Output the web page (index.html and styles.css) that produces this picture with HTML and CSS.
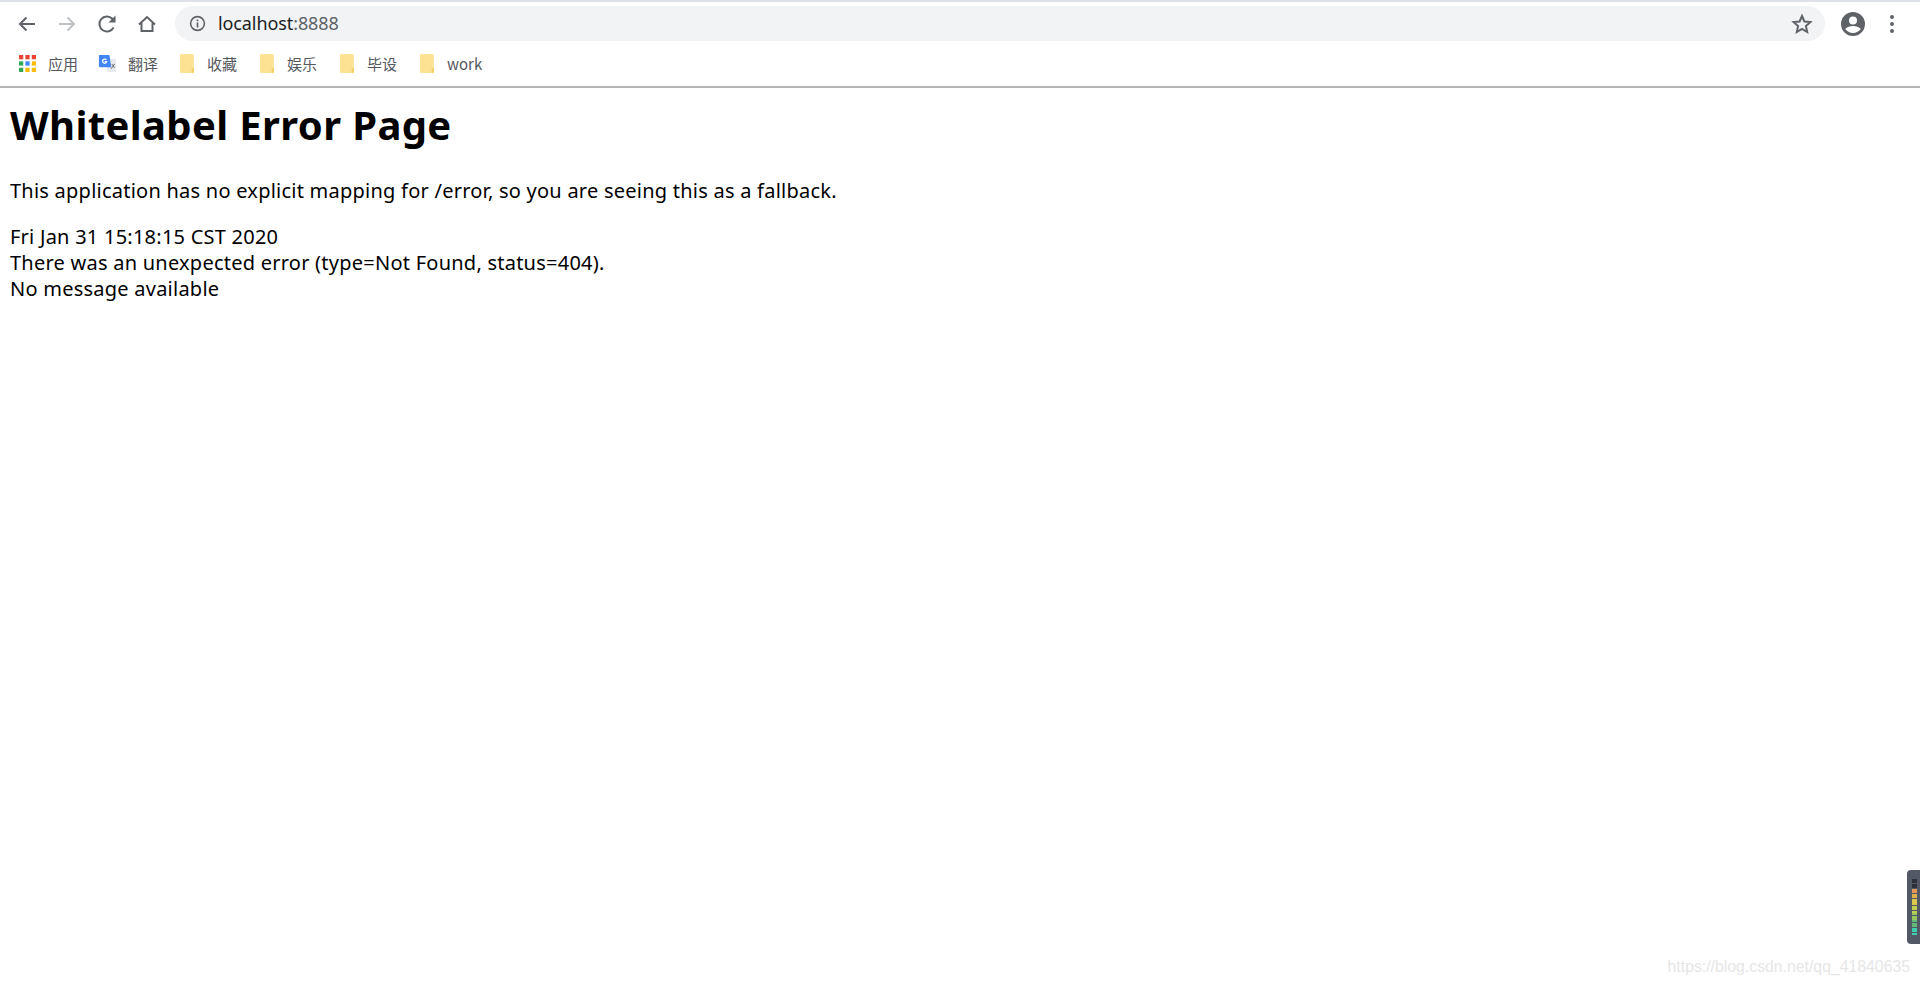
FILE: index.html
```html
<!DOCTYPE html>
<html lang="en">
<head>
<meta charset="utf-8">
<title>Whitelabel Error Page</title>
<link rel="stylesheet" href="styles.css">
</head>
<body>
<header class="chrome">
  <div class="toolbar">
    <svg class="nav" viewBox="0 0 24 24"><path class="line dark" d="M20 12H5M11.5 5.5L5 12l6.500 6.500"/></svg>
    <svg class="nav" viewBox="0 0 24 24"><path class="line faint" d="M4 12h15M12.500 5.500L19 12l-6.500 6.500"/></svg>
    <svg class="nav" viewBox="0 0 24 24"><path class="line dark" d="M18.600 15.500A7.500 7.500 0 1 1 17.300 6.700L19.500 9"/><path class="fill" d="M20.500 3.500v7h-7z"/></svg>
    <svg class="nav" viewBox="0 0 24 24"><path class="line dark" d="M4 12.500L12 5l8 7.500M6.500 11v8h11v-8"/></svg>
    <div class="omnibox">
      <svg class="info" viewBox="0 0 16 16"><circle class="line dark thin" cx="8" cy="8" r="6.500"/><path class="fill" d="M7.200 7h1.600v4.700H7.200zM7.200 4.200h1.600v1.600H7.200z"/></svg>
      <span class="url">localhost<span class="port">:8888</span></span>
      <svg class="star" viewBox="0 0 24 24"><path class="line dark" d="M12 4l2.400 5.500 6 .6-4.500 4 1.300 5.900L12 17l-5.200 3 1.300-5.900-4.500-4 6-.6z"/></svg>
    </div>
    <svg class="avatar" viewBox="0 0 24 24"><path class="fill" d="M12 0a12 12 0 1 0 0 24 12 12 0 0 0 0-24zm0 4.500a4 4 0 1 1 0 8 4 4 0 0 1 0-8zM12 21c-3.300 0-6.200-1.500-7.800-3.900 1.500-2 5-3.100 7.800-3.100s6.300 1.100 7.800 3.100C18.200 19.500 15.300 21 12 21z"/></svg>
    <div class="menu"><i></i><i></i><i></i></div>
  </div>
  <nav class="bookmarks">
    <a class="mark">
      <svg class="mark-icon apps" viewBox="0 0 16 16">
        <rect class="c-red" x="0" y="0" width="4" height="4"/><rect class="c-red" x="6" y="0" width="4" height="4"/><rect class="c-red" x="12" y="0" width="4" height="4"/>
        <rect class="c-green" x="0" y="6" width="4" height="4"/><rect class="c-blue" x="6" y="6" width="4" height="4"/><rect class="c-orange" x="12" y="6" width="4" height="4"/>
        <rect class="c-green" x="0" y="12" width="4" height="4"/><rect class="c-orange" x="6" y="12" width="4" height="4"/><rect class="c-orange" x="12" y="12" width="4" height="4"/>
      </svg>
      <span>应用</span>
    </a>
    <a class="mark">
      <svg class="mark-icon translate" viewBox="0 0 20 20"><path class="c-page" d="M8 5h11v14H10z"/><path class="c-blue" d="M1 1h11l2 13H2.500A1.500 1.500 0 0 1 1 12.500z"/><path class="g-ring" d="M8.800 6.200A2.200 2.200 0 1 0 9.200 8H7"/><path class="g-dark" d="M14.500 10.500l3 4M17.500 10.500l-3.500 5"/></svg>
      <span>翻译</span>
    </a>
    <a class="mark"><svg class="mark-icon folder" viewBox="1 1 14 18"><use href="#folder"/></svg><span>收藏</span></a>
    <a class="mark"><svg class="mark-icon folder" viewBox="1 1 14 18"><use href="#folder"/></svg><span>娱乐</span></a>
    <a class="mark"><svg class="mark-icon folder" viewBox="1 1 14 18"><use href="#folder"/></svg><span>毕设</span></a>
    <a class="mark"><svg class="mark-icon folder" viewBox="1 1 14 18"><use href="#folder"/></svg><span>work</span></a>
  </nav>
  <svg class="defs" width="0" height="0"><defs><g id="folder"><path class="c-folder" d="M2 1h10.500A1.500 1.500 0 0 1 14 2.500V18a1 1 0 0 1-1 1H2a1 1 0 0 1-1-1V2a1 1 0 0 1 1-1z"/><path class="c-tab" d="M12 14h2v5h-2z"/></g></defs></svg>
</header>
<main class="page">
  <h1>Whitelabel Error Page</h1>
  <p>This application has no explicit mapping for /error, so you are seeing this as a fallback.</p>
  <div>Fri Jan 31 15:18:15 CST 2020</div>
  <div>There was an unexpected error (type=Not Found, status=404).</div>
  <div>No message available</div>
</main>
<aside class="meter"><i class="off"></i><i class="off"></i><i class="off"></i><i class="off"></i><i class="l1"></i><i class="l1"></i><i class="l2"></i><i class="l2"></i><i class="l3"></i><i class="l3"></i><i class="l3"></i><i class="l4"></i><i class="l4"></i><i class="l4"></i><i class="l5"></i><i class="l5"></i><i class="l5"></i><i class="l6"></i><i class="l6"></i><i class="l6"></i><i class="l7"></i><i class="l7"></i><i class="l7"></i></aside>
<div class="watermark">https://blog.csdn.net/qq_41840635</div>
</body>
</html>
```
FILE: styles.css
```css
* { box-sizing: border-box; }
html, body { margin: 0; height: 100%; overflow: hidden; }
body { background: #fff; color: #000; font-family: "Noto Sans", "Noto Sans CJK SC", sans-serif; }

.chrome { height: 88px; border-top: 2px solid #dee1e6; border-bottom: 2px solid #b5b5b5; background: #fff; }
.toolbar { height: 43px; display: flex; align-items: center; padding: 0 0 0 15px; }
.nav { width: 24px; height: 24px; margin-right: 16px; flex: none; }
.line { fill: none; stroke-width: 2; }
.thin { stroke-width: 1.500; }
.dark { stroke: #5f6368; }
.faint { stroke: #bdc1c6; }
.fill { fill: #5f6368; }
.omnibox { flex: 1; height: 35px; border-radius: 18px; background: #f1f3f4; display: flex; align-items: center; padding: 0 11px 0 14px; }
.info { width: 17px; height: 17px; flex: none; }
.url { flex: 1; margin-left: 12px; padding-bottom: 2px; font-size: 18px; color: #202124; font-family: "Noto Sans", sans-serif; letter-spacing: -0.1px; }
.port { color: #5f6368; }
.star { width: 24px; height: 24px; flex: none; }
.avatar { width: 24px; height: 24px; margin-left: 16px; flex: none; }
.menu { width: 4px; margin: 0 26px 0 25px; display: flex; flex-direction: column; gap: 3px; flex: none; }
.menu i { display: block; width: 4px; height: 4px; border-radius: 50%; background: #5f6368; }

.bookmarks { height: 41px; display: flex; align-items: center; padding: 0 0 5px 19px; font-size: 15px; color: #55595e; font-family: "Noto Sans CJK SC", "Noto Sans", sans-serif; }
.mark { display: flex; align-items: center; width: 80px; gap: 12px; flex: none; }
.mark-icon { width: 17px; height: 20px; flex: none; }
.apps { width: 17px; height: 17px; }
.translate { width: 19px; height: 19px; margin-left: -1px; margin-right: -1px; }
.folder { width: 15px; height: 19px; margin-left: 1px; }
.c-red { fill: #ea4335; }
.c-green { fill: #34a853; }
.c-blue { fill: #4285f4; }
.c-orange { fill: #fbbc05; }
.c-page { fill: #e8eaed; }
.g-ring { fill: none; stroke: #fff; stroke-width: 1.300; }
.g-dark { fill: none; stroke: #5f6368; stroke-width: 1; }
.c-folder { fill: #fde293; }
.c-tab { fill: #f6cf65; }
.defs { position: absolute; }

.page { padding: 0 10px; font-size: 20px; line-height: 26px; letter-spacing: 0.24px; }
h1 { margin: 0 0 28px; padding-top: 12px; font-size: 40px; line-height: 50px; font-weight: 700; letter-spacing: 0.37px; }
p { margin: 0 0 20px; }

.meter { position: absolute; right: 0; top: 870px; width: 13px; height: 74px; padding: 9px 3px 0 5px; border-radius: 4px 0 0 4px; background: #525866; display: flex; flex-direction: column; gap: 0.450px; }
.meter i { display: block; height: 2px; flex: none; }
.off { background: #2c303a; }
.l1 { background: #e8975a; }
.l2 { background: #e0b04b; }
.l3 { background: #dcca4c; }
.l4 { background: #c4d052; }
.l5 { background: #96c85e; }
.l6 { background: #62b878; }
.l7 { background: #3dcfb0; }
.watermark { position: absolute; right: 10px; bottom: 8px; font-family: "Liberation Sans", sans-serif; font-size: 15.800px; color: #e6e6e6; }
```
